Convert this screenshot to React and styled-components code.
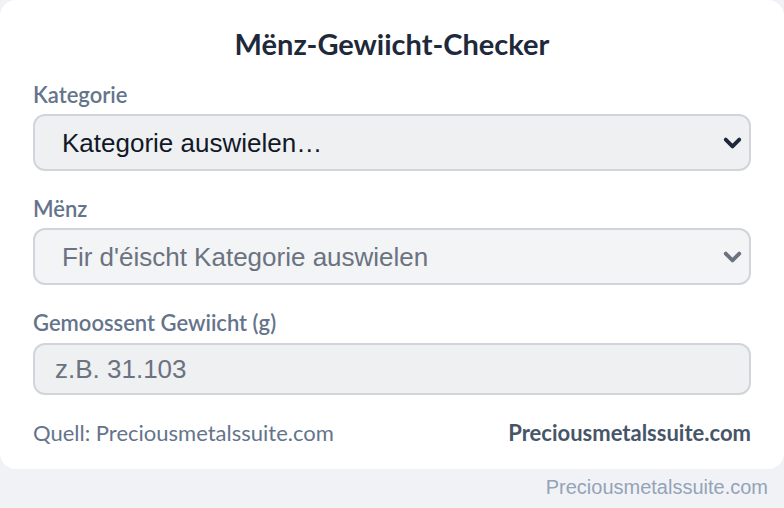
import React from 'react';
import styled, { createGlobalStyle } from 'styled-components';
import { ChevronDown } from 'lucide-react';

const GlobalStyle = createGlobalStyle`
	html, body {
		margin: 0;
		padding: 0;
		background: #f0f2f6;
	}
	body {
		font-family: Lato, "Liberation Sans", sans-serif;
	}
`;

const Page = styled.div`
	width: 784px;
	min-height: 508px;
	display: flex;
	flex-direction: column;
`;

const Card = styled.div`
	background: #ffffff;
	border-radius: 16px;
	padding: 26px 33px 23px 33px;
	display: flex;
	flex-direction: column;
`;

const Title = styled.h1`
	margin: 0 0 20px 0;
	text-align: center;
	font-family: Lato, sans-serif;
	font-size: 29px;
	line-height: 36px;
	font-weight: 700;
	color: #1e293b;
`;

const Field = styled.div`
	display: flex;
	flex-direction: column;
	gap: ${(p) => p.$gap || 6}px;
	margin-bottom: 25px;
`;

const Label = styled.label`
	font-family: Lato, sans-serif;
	font-size: 22px;
	line-height: 26px;
	font-weight: 600;
	color: #64748b;
`;

const SelectWrap = styled.div`
	position: relative;
	color: ${(p) => (p.$muted ? '#6b7280' : '#1e293b')};
`;

const Select = styled.select`
	appearance: none;
	width: 100%;
	height: 57px;
	box-sizing: border-box;
	border: 2px solid #d1d5db;
	border-radius: 12px;
	background: ${(p) => (p.disabled ? '#f3f4f6' : '#eff0f2')};
	padding: 0 48px 0 27px;
	font-family: "Liberation Sans", Arial, sans-serif;
	font-size: 26px;
	color: ${(p) => (p.disabled ? '#6b7280' : '#111827')};
	opacity: 1;
`;

const Chevron = styled(ChevronDown)`
	position: absolute;
	right: 5px;
	top: 50%;
	transform: translateY(-50%);
	pointer-events: none;
`;

const Input = styled.input`
	width: 100%;
	height: 52px;
	box-sizing: border-box;
	border: 2px solid #d1d5db;
	border-radius: 12px;
	background: #eff0f2;
	padding: 0 20px;
	font-family: "Liberation Sans", Arial, sans-serif;
	font-size: 26px;
	color: #111827;

	&::placeholder {
		color: #6b7280;
	}
`;

const Footer = styled.div`
	display: flex;
	justify-content: space-between;
	align-items: center;
	font-family: Lato, sans-serif;
	font-size: 22px;
	line-height: 26px;
`;

const Source = styled.span`
	color: #64748b;
`;

const Brand = styled.span`
	color: #475569;
	font-weight: 700;
`;

const Credit = styled.div`
	align-self: flex-end;
	padding: 6px 16px 0 0;
	font-family: "Liberation Sans", Arial, sans-serif;
	font-size: 20px;
	line-height: 24px;
	color: #94a3b8;
`;

export default function App() {
	return (
		<>
			<GlobalStyle />
			<Page>
				<Card>
					<Title>Mënz-Gewiicht-Checker</Title>
					<Field>
						<Label>Kategorie</Label>
						<SelectWrap>
							<Select defaultValue="">
								<option value="">Kategorie auswielen…</option>
							</Select>
							<Chevron size={27} strokeWidth={3.4} />
						</SelectWrap>
					</Field>
					<Field>
						<Label>Mënz</Label>
						<SelectWrap $muted>
							<Select disabled defaultValue="">
								<option value="">Fir d'éischt Kategorie auswielen</option>
							</Select>
							<Chevron size={27} strokeWidth={3.4} />
						</SelectWrap>
					</Field>
					<Field $gap={7}>
						<Label>Gemoossent Gewiicht (g)</Label>
						<Input placeholder="z.B. 31.103" />
					</Field>
					<Footer>
						<Source>Quell: Preciousmetalssuite.com</Source>
						<Brand>Preciousmetalssuite.com</Brand>
					</Footer>
				</Card>
				<Credit>Preciousmetalssuite.com</Credit>
			</Page>
		</>
	);
}
